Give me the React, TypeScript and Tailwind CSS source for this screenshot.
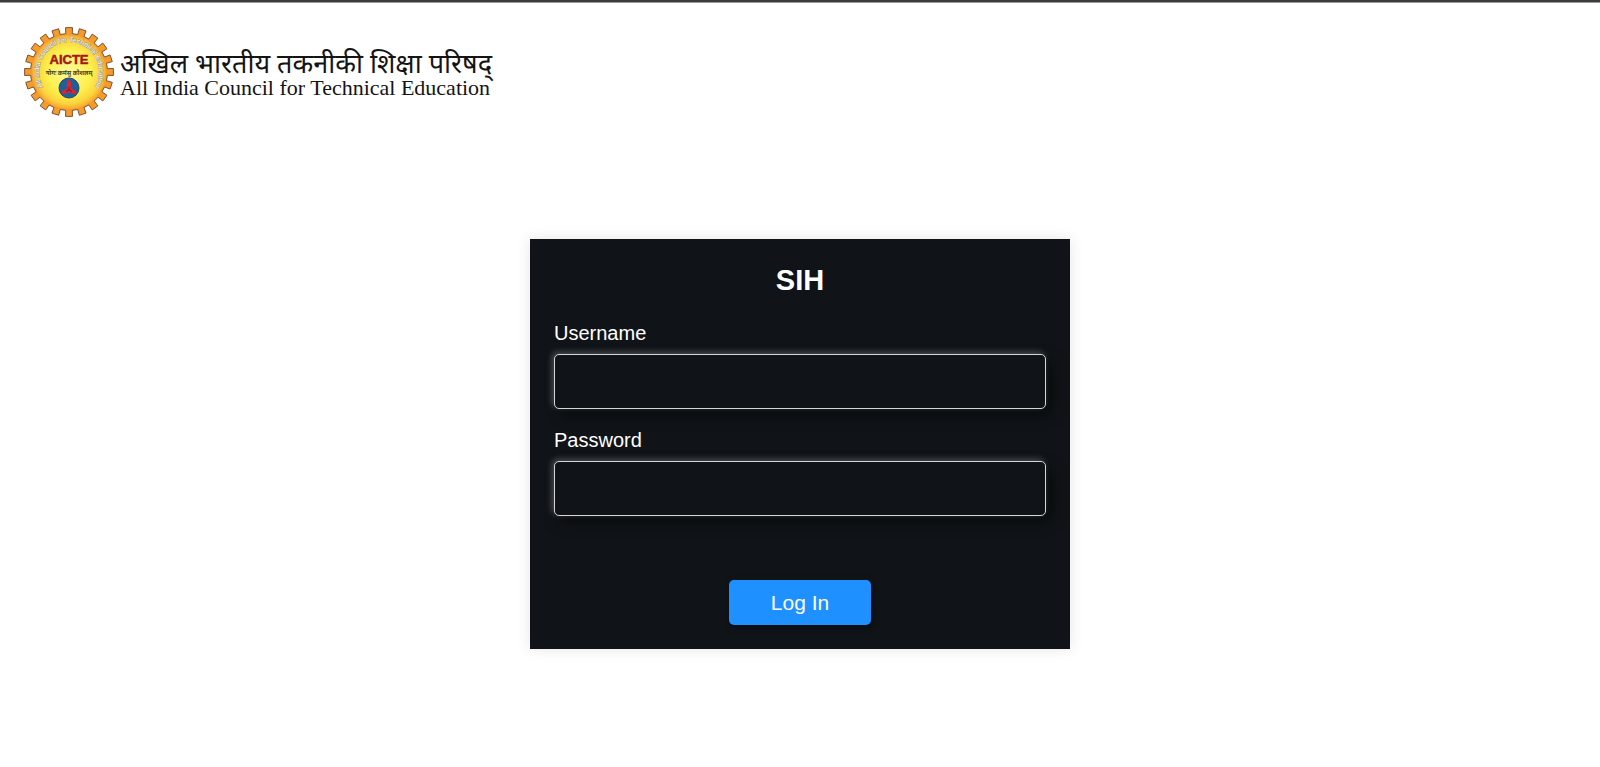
import React from "react";

const TEETH = 20;

function gearPath(cx: number, cy: number, outer: number, root: number): string {
  const step = (Math.PI * 2) / TEETH;
  const pts: string[] = [];
  for (let i = 0; i < TEETH; i++) {
    const a = i * step - Math.PI / 2;
    const corners: [number, number][] = [
      [root, -0.27],
      [outer, -0.25],
      [outer, 0.25],
      [root, 0.27],
    ];
    for (const [r, k] of corners) {
      pts.push(
        `${(cx + r * Math.cos(a + k * step)).toFixed(2)} ${(cy + r * Math.sin(a + k * step)).toFixed(2)}`,
      );
    }
  }
  return `M${pts.join("L")}Z`;
}

function Emblem() {
  return (
    <svg viewBox="0 0 90 90" className="size-[90px] shrink-0" role="img" aria-label="AICTE">
      <defs>
        <radialGradient id="disc" cx="0.5" cy="0.5" r="0.5">
          <stop offset="0" stopColor="#fffa9c" />
          <stop offset="0.6" stopColor="#fdf04e" />
          <stop offset="0.85" stopColor="#fbd63c" />
          <stop offset="1" stopColor="#f8a92f" />
        </radialGradient>
        <path id="ring" d="M25.700 68A30 30 0 1 1 64.300 68" />
      </defs>
      <path d={gearPath(45, 45, 44.500, 38.500)} fill="#f59a2c" stroke="#7d5230" strokeWidth="1" strokeLinejoin="round" />
      <circle cx="45" cy="45" r="37" fill="url(#disc)" />
      <text fontSize="7" fill="#fffdf2" stroke="#98928c" strokeWidth="0.8" paintOrder="stroke" className="font-['Liberation_Sans']">
        <textPath href="#ring" startOffset="50%" textAnchor="middle">
          All India Council for Technical Education
        </textPath>
      </text>
      <text x="45" y="37" textAnchor="middle" fontSize="13" fill="#a5161c" stroke="#a5161c" strokeWidth="0.5" className="font-['Liberation_Sans'] font-bold">
        AICTE
      </text>
      <text x="45" y="48" textAnchor="middle" fontSize="6" fill="#4b4316" className="font-['Noto_Sans'] font-bold">
        योगः कर्मसु कौशलम्
      </text>
      <circle cx="45" cy="61" r="10" fill="#1f5f9c" stroke="#24456b" strokeWidth="1" />
      <path d="M45 52C47.500 55.500 47.800 58 46.600 61L51.500 64.300C53 66 52 67.500 49.800 67L45 65.200L40.200 67C38 67.500 37 66 38.500 64.300L43.400 61C42.200 58 42.500 55.500 45 52Z" fill="#e3222b" />
      <path d="M45 60V63M45 63L42 64.500M45 63L48 64.500" stroke="#5b1730" strokeWidth="0.800" fill="none" />
    </svg>
  );
}

function Field({ id, label, type }: { id: string; label: string; type: string }) {
  return (
    <div className="flex flex-col gap-2.5">
      <label htmlFor={id} className="text-[20px] leading-[22px] text-white">
        {label}
      </label>
      <input
        id={id}
        name={id}
        type={type}
        className="h-[55px] w-full rounded-[5px] border border-[#d4d6d8] bg-[#101418] px-3 text-[20px] text-white shadow-[-2px_-2px_6px_rgba(255,255,255,0.25),6px_6px_14px_rgba(0,0,0,0.5)] outline-none"
      />
    </div>
  );
}

export default function App() {
  return (
    <div className="min-h-screen border-t-2 border-[#3f3c3d] bg-white font-['Liberation_Sans',Arial,sans-serif]">
      <header className="flex items-center gap-1.5 border-t border-[#9d9b9c] px-6 pt-6">
        <Emblem />
        <div className="flex flex-col pt-1.5 whitespace-nowrap text-[#141414]">
          <span lang="hi" className="font-['Noto_Sans','Noto_Sans_Devanagari',sans-serif] text-[27px] leading-[26px]">
            अखिल भारतीय तकनीकी शिक्षा परिषद्
          </span>
          <span className="font-['Liberation_Serif',serif] text-[22px] leading-6">
            All India Council for Technical Education
          </span>
        </div>
      </header>
      <main className="px-6 pt-[122px] pb-8">
        <form
          onSubmit={(e: React.FormEvent) => e.preventDefault()}
          className="mx-auto flex w-full max-w-[540px] flex-col bg-[#101418] p-6 shadow-[0_0_14px_rgba(0,0,0,0.1)]"
        >
          <h1 className="mb-6 text-center text-[29px] leading-[35px] font-bold text-white">SIH</h1>
          <div className="flex flex-col gap-5">
            <Field id="username" label="Username" type="text" />
            <Field id="password" label="Password" type="password" />
          </div>
          <button
            type="submit"
            className="mt-16 self-center rounded-[5px] bg-[#1e90ff] px-[42px] text-[21px] leading-[45px] text-white shadow-[2px_2px_6px_rgba(0,0,0,0.5)]"
          >
            Log In
          </button>
        </form>
      </main>
    </div>
  );
}
